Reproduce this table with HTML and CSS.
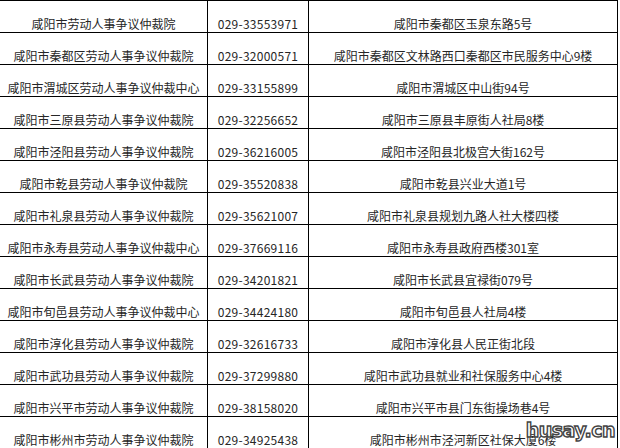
FILE: index.html
```html
<!DOCTYPE html>
<html lang="zh-CN">
<head>
<meta charset="utf-8">
<title>咸阳市劳动人事争议仲裁机构</title>
<link rel="stylesheet" href="styles.css">
</head>
<body>
<div class="page">
<table class="list">
<colgroup><col class="c-name"><col class="c-tel"><col class="c-addr"></colgroup>
<tbody>
<tr><td>咸阳市劳动人事争议仲裁院</td><td class="tel">029-33553971</td><td>咸阳市秦都区玉泉东路5号</td></tr>
<tr><td>咸阳市秦都区劳动人事争议仲裁院</td><td class="tel">029-32000571</td><td>咸阳市秦都区文林路西口秦都区市民服务中心9楼</td></tr>
<tr><td>咸阳市渭城区劳动人事争议仲裁中心</td><td class="tel">029-33155899</td><td>咸阳市渭城区中山街94号</td></tr>
<tr><td>咸阳市三原县劳动人事争议仲裁院</td><td class="tel">029-32256652</td><td>咸阳市三原县丰原街人社局8楼</td></tr>
<tr><td>咸阳市泾阳县劳动人事争议仲裁院</td><td class="tel">029-36216005</td><td>咸阳市泾阳县北极宫大街162号</td></tr>
<tr><td>咸阳市乾县劳动人事争议仲裁院</td><td class="tel">029-35520838</td><td>咸阳市乾县兴业大道1号</td></tr>
<tr><td>咸阳市礼泉县劳动人事争议仲裁院</td><td class="tel">029-35621007</td><td>咸阳市礼泉县规划九路人社大楼四楼</td></tr>
<tr><td>咸阳市永寿县劳动人事争议仲裁中心</td><td class="tel">029-37669116</td><td>咸阳市永寿县政府西楼301室</td></tr>
<tr><td>咸阳市长武县劳动人事争议仲裁院</td><td class="tel">029-34201821</td><td>咸阳市长武县宜禄街079号</td></tr>
<tr><td>咸阳市旬邑县劳动人事争议仲裁中心</td><td class="tel">029-34424180</td><td>咸阳市旬邑县人社局4楼</td></tr>
<tr><td>咸阳市淳化县劳动人事争议仲裁院</td><td class="tel">029-32616733</td><td>咸阳市淳化县人民正街北段</td></tr>
<tr><td>咸阳市武功县劳动人事争议仲裁院</td><td class="tel">029-37299880</td><td>咸阳市武功县就业和社保服务中心4楼</td></tr>
<tr><td>咸阳市兴平市劳动人事争议仲裁院</td><td class="tel">029-38158020</td><td>咸阳市兴平市县门东街操场巷4号</td></tr>
<tr><td>咸阳市彬州市劳动人事争议仲裁院</td><td class="tel">029-34925438</td><td>咸阳市彬州市泾河新区社保大厦6楼</td></tr>
</tbody>
</table>
<div class="mark">husay.cn</div>
</div>
</body>
</html>
```

FILE: styles.css
```css
html, body {
  margin: 0;
  padding: 0;
  background: #fff;
}
.page {
  position: relative;
  width: 620px;
  height: 448px;
  overflow: hidden;
}
.list {
  border-collapse: separate;
  border-spacing: 0;
  table-layout: fixed;
  width: 618px;
  border-top: 1px solid #000;
  font-family: "Noto Sans CJK SC", "Noto Sans", sans-serif;
  font-size: 12px;
  color: #262626;
}
.c-name { width: 208px; }
.c-tel { width: 101px; }
.c-addr { width: 309px; }
.list td {
  border-right: 1px solid #000;
  border-bottom: 1px solid #000;
  padding: 16px 0 2px;
  height: 13px;
  line-height: 13px;
  text-align: center;
  white-space: nowrap;
  overflow: hidden;
}
.list td.tel {
  letter-spacing: 0.25px;
}
.mark {
  position: absolute;
  right: 5px;
  bottom: 8px;
  font-family: "DejaVu Sans", sans-serif;
  font-weight: bold;
  font-size: 19px;
  letter-spacing: -0.5px;
  color: #fff;
  -webkit-text-stroke: 1.4px #444;
  line-height: 1;
}
```
